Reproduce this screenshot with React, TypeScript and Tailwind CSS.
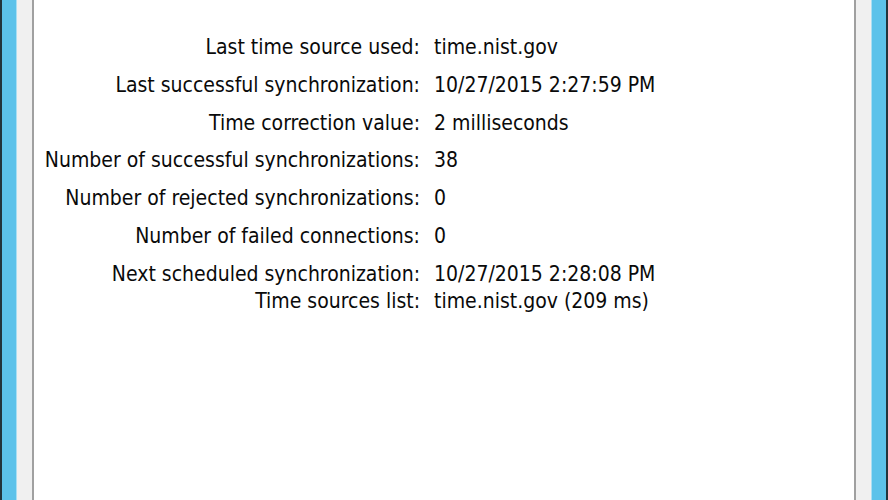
import React from "react";

const rows: [string, string, string][] = [
  ["Last time source used:", "time.nist.gov", "mb-[14px]"],
  ["Last successful synchronization:", "10/27/2015 2:27:59 PM", "mb-[14px]"],
  ["Time correction value:", "2 milliseconds", "mb-[13px]"],
  ["Number of successful synchronizations:", "38", "mb-[14px]"],
  ["Number of rejected synchronizations:", "0", "mb-[14px]"],
  ["Number of failed connections:", "0", "mb-[14px]"],
  ["Next scheduled synchronization:", "10/27/2015 2:28:08 PM", "mb-[3px]"],
  ["Time sources list:", "time.nist.gov (209 ms)", "mb-0"],
];

export default function App() {
  return (
    <div className="flex h-[500px] w-[888px] overflow-hidden bg-white">
      <div className="w-[2px] bg-[#22343c]" />
      <div className="w-[14px] bg-[#5cc2ea]" />
      <div className="w-[1px] bg-[#a9def3]" />
      <div className="w-[15px] bg-[#f0f0f0]" />
      <div className="w-[2px] bg-[#a0a0a0]" />
      <div
        className="flex-1 bg-white pt-[35px] text-[21px] leading-[24px] text-[#0a0a0a]"
        style={{ fontFamily: '"DejaVu Sans Condensed", "DejaVu Sans", sans-serif' }}
      >
        <div className="grid grid-cols-[386px_1fr]">
          {rows.map(([label, value, mb]) => (
            <React.Fragment key={label}>
              <div className={`whitespace-nowrap text-right ${mb}`}>{label}</div>
              <div className={`whitespace-nowrap pl-[14px] ${mb}`}>{value}</div>
            </React.Fragment>
          ))}
        </div>
      </div>
      <div className="w-[2px] bg-[#a0a0a0]" />
      <div className="w-[15px] bg-[#f0f0f0]" />
      <div className="w-[1px] bg-[#a9def3]" />
      <div className="w-[14px] bg-[#5cc2ea]" />
      <div className="w-[2px] bg-[#22343c]" />
    </div>
  );
}
